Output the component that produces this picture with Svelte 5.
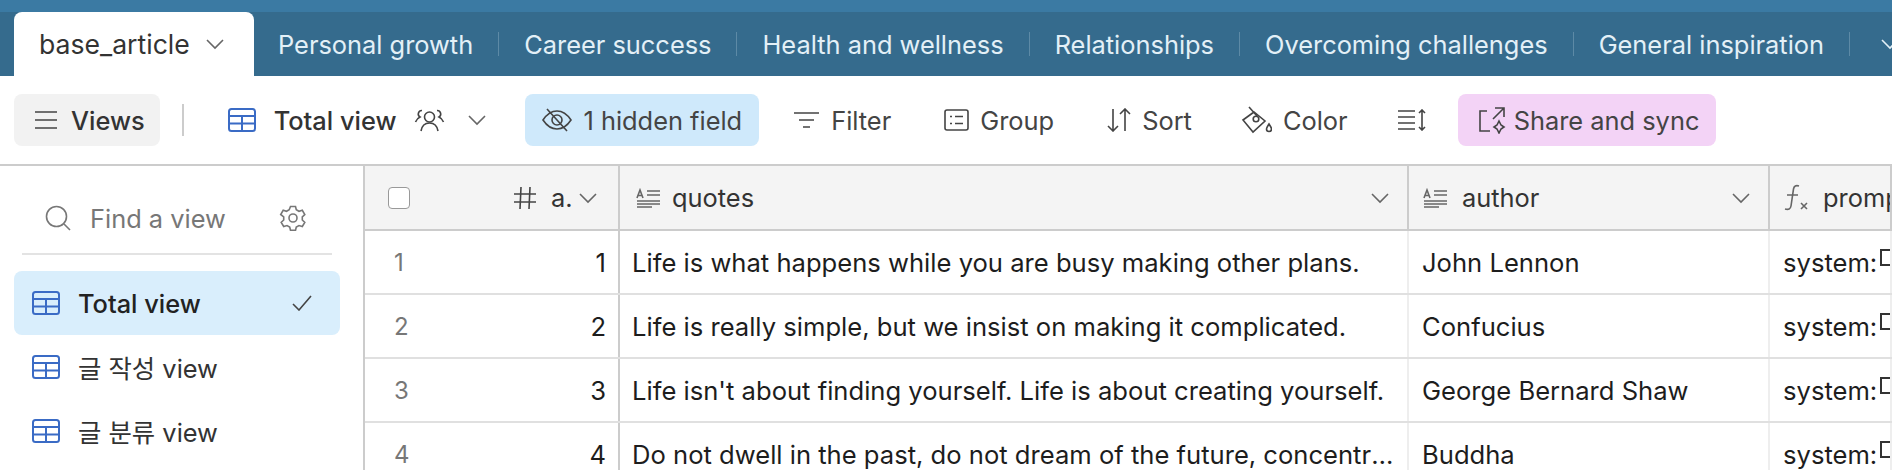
<script>
  const tabs = ['Personal growth', 'Career success', 'Health and wellness', 'Relationships', 'Overcoming challenges', 'General inspiration'];
  const views = [
    { name: 'Total view', active: true },
    { name: '글 작성 view' },
    { name: '글 분류 view' }
  ];
  const rows = [
    { n: 1, quote: 'Life is what happens while you are busy making other plans.', author: 'John Lennon' },
    { n: 2, quote: 'Life is really simple, but we insist on making it complicated.', author: 'Confucius' },
    { n: 3, quote: "Life isn't about finding yourself. Life is about creating yourself.", author: 'George Bernard Shaw' },
    { n: 4, quote: 'Do not dwell in the past, do not dream of the future, concentrate the mind on the present moment.', author: 'Buddha' }
  ];
</script>

{#snippet chevron(w = 18)}
  <svg class="chev" width={w} height="12" viewBox="0 0 18 12"><path d="M1 2l8 8 8-8" /></svg>
{/snippet}

{#snippet grid()}
  <svg class="grid-icon" width="28" height="24" viewBox="0 0 28 24"><rect x="1" y="1" width="26" height="22" rx="2.5" /><path d="M1 8h26M1 15.5h26M14 8v15" /></svg>
{/snippet}

{#snippet textIcon()}
  <svg class="ic soft" width="25" height="20" viewBox="0 0 25 20"><path d="M1 10l3-8 3 8M2.2 7.5h3.6M11 3h13M11 7h13M1 13h23M1 16h23M1 19h15" /></svg>
{/snippet}

<div class="page">
  <div class="tabbar">
    <div class="tab-active">
      <span>base_article</span>
      {@render chevron()}
    </div>
    {#each tabs as tab}
      <span class="tab">{tab}</span>
      <span class="sep"></span>
    {/each}
    <svg class="more" width="18" height="12" viewBox="0 0 18 12"><path d="M1 2l8 8 8-8" /></svg>
  </div>

  <div class="toolbar">
    <button class="btn views">
      <svg class="ic" width="24" height="20" viewBox="0 0 24 20"><path d="M1 2h22M1 10h22M1 18h22" /></svg>
      <b>Views</b>
    </button>
    <span class="vline"></span>
    <div class="current">
      {@render grid()}
      <b>Total view</b>
      <svg class="ic people" width="31" height="24" viewBox="0 0 31 24"><circle cx="15.5" cy="9" r="5" /><path d="M7 23c1-6 4-8 8.5-8s7.500 2 8.500 8M8 2.500a3.500 3.500 0 0 0-2 6.500c-2 1-3.500 2.500-4.500 5M23 2.500a3.500 3.500 0 0 1 2 6.500c2 1 3.500 2.500 4.500 5" /></svg>
      {@render chevron()}
    </div>
    <button class="btn hidden-field">
      <svg class="ic" width="30" height="26" viewBox="0 0 30 26"><path d="M1 13c4-6 8.500-9 14-9s10 3 14 9c-4 6-8.500 9-14 9S5 19 1 13zM5 2l20 22" /><circle cx="15" cy="13" r="5" /></svg>
      <span>1 hidden field</span>
    </button>
    <button class="btn">
      <svg class="ic" width="27" height="18" viewBox="0 0 27 18"><path d="M1 2h25M6 9h15M10 16h7" /></svg>
      <span>Filter</span>
    </button>
    <button class="btn group">
      <svg class="ic" width="25" height="22" viewBox="0 0 25 22"><rect x="1" y="1" width="23" height="20" rx="2" /><path d="M6 7.500h2M6 14.500h2M11 7.500h8M11 14.500h8" /></svg>
      <span>Group</span>
    </button>
    <button class="btn sort">
      <svg class="ic" width="24" height="24" viewBox="0 0 24 24"><path d="M6 1v22M1 18l5 5 5-5M18 23V1M13 6l5-5 5 5" /></svg>
      <span>Sort</span>
    </button>
    <button class="btn color">
      <svg class="ic" width="31" height="28" viewBox="0 0 31 28"><path d="M13 6L2 14l10 12 12-11zM8 1l8 9" /><circle cx="15" cy="13" r="2.800" /><path d="M28 18c-1.500 2.500-2.500 3.500-2.500 5a2.500 2.500 0 0 0 5 0c0-1.500-1-2.500-2.500-5z" /></svg>
      <span>Color</span>
    </button>
    <button class="btn density">
      <svg class="ic" width="29" height="22" viewBox="0 0 29 22"><path d="M1 2h17M1 8h17M1 14h17M1 20h17M25 1v20M22 4l3-3 3 3M22 18l3 3 3-3" /></svg>
    </button>
    <button class="btn share">
      <svg class="ic" width="28" height="28" viewBox="0 0 28 28"><path d="M9 5H2v20h10M15 13L26 2M17 2h9v9" /><path d="M21 15l2 4 3 2-3 2-2 4-2-4-3-2 3-2z" /></svg>
      <span>Share and sync</span>
    </button>
  </div>

  <div class="body">
    <aside class="sidebar">
      <div class="search">
        <svg class="ic light" width="26" height="26" viewBox="0 0 26 26"><circle cx="11.500" cy="11.500" r="10" /><path d="M19 19l6 6" /></svg>
        <span class="find">Find a view</span>
        <svg class="ic light gear" width="28" height="26" viewBox="0 0 28 26"><circle cx="14" cy="13" r="4" /><path d="M11.500 1.500h5l.8 3.300 2.700 1.500 3.300-1 2.500 4.200-2.500 2.300v3.200l2.500 2.300-2.500 4.200-3.300-1-2.700 1.500-.8 3.300h-5l-.8-3.300-2.700-1.500-3.300 1-2.500-4.200 2.500-2.300v-3.200L1.700 9.500l2.500-4.200 3.300 1 2.700-1.500z" /></svg>
      </div>
      <div class="rule"></div>
      {#each views as view}
        <div class="view" class:active={view.active}>
          {@render grid()}
          <span class="view-name">{view.name}</span>
          {#if view.active}
            <svg class="ic check" width="20" height="16" viewBox="0 0 20 16"><path d="M1 9l6 6L19 1" /></svg>
          {/if}
        </div>
      {/each}
    </aside>

    <div class="table">
      <div class="row head">
        <div class="c-id">
          <span class="checkbox"></span>
          <svg class="ic" width="24" height="24" viewBox="0 0 24 24"><path d="M8 1L7 23M17 1l-1 22M1 8h22M1 16h22" /></svg>
          <span class="short">a.</span>
          {@render chevron()}
        </div>
        <div class="c-quote">
          {@render textIcon()}
          <span class="title">quotes</span>
          {@render chevron()}
        </div>
        <div class="c-author">
          {@render textIcon()}
          <span class="title">author</span>
          {@render chevron()}
        </div>
        <div class="c-prompt">
          <svg class="ic soft" width="25" height="28" viewBox="0 0 25 28"><path d="M15 2c-3-1-5 0-5.500 3L7 22c-.5 3-2.500 4-6 3M3 11h11M17 19l6 6M23 19l-6 6" /></svg>
          <span class="title">prompt</span>
        </div>
      </div>
      {#each rows as row}
        <div class="row">
          <div class="c-id">
            <span class="num">{row.n}</span>
            <span class="value">{row.n}</span>
          </div>
          <div class="c-quote"><span class="text">{row.quote}</span></div>
          <div class="c-author"><span class="text">{row.author}</span></div>
          <div class="c-prompt"><span class="sys">system:</span><span class="tofu"></span></div>
        </div>
      {/each}
    </div>
  </div>
</div>

<style>
  :global(body) {
    margin: 0;
    background: #fff;
  }

  .page {
    width: 1892px;
    height: 470px;
    overflow: hidden;
    font-family: Inter, "Noto Sans CJK KR", sans-serif;
    font-size: 25.4px;
    color: #333;
  }

  svg {
    flex: none;
    fill: none;
    stroke-width: 1.6;
  }

  .ic {
    stroke: #444;
  }

  .ic.soft {
    stroke: #666;
  }

  .ic.light {
    stroke: #777;
  }

  .chev {
    stroke: #666;
  }

  .grid-icon {
    stroke: #3a6bc5;
    stroke-width: 2;
  }

  /* top bar */
  .tabbar {
    height: 64px;
    border-top: 12px solid #3b7aa3;
    background: #356b8d;
    display: flex;
    align-items: center;
    gap: 25px;
    overflow: hidden;
    white-space: nowrap;
  }

  .tab-active {
    flex: none;
    margin-left: 14px;
    margin-right: -1px;
    width: 240px;
    height: 64px;
    box-sizing: border-box;
    padding-left: 25px;
    display: flex;
    align-items: center;
    gap: 16px;
    font-size: 26.6px;
    background: #fff;
    border-radius: 8px 8px 0 0;
  }

  .tab {
    flex: none;
    color: #e3f0f7;
  }

  .sep {
    flex: none;
    width: 1px;
    height: 24px;
    background: #5d8aa6;
  }

  .more {
    stroke: #e3f0f7;
    margin-left: 6px;
  }

  /* toolbar */
  .toolbar {
    height: 88px;
    border-bottom: 2px solid #ccc;
    display: flex;
    align-items: center;
    gap: 17px;
    padding-left: 14px;
  }

  .btn {
    height: 52px;
    padding: 0 17px;
    display: flex;
    align-items: center;
    gap: 11px;
    border: none;
    border-radius: 8px;
    background: none;
    font: inherit;
    color: #444;
    white-space: nowrap;
  }

  b {
    font-weight: 500;
  }

  .views {
    background: #f2f2f2;
    padding: 0 15px 0 20px;
    gap: 13px;
    color: #333;
  }

  .vline {
    width: 2px;
    height: 32px;
    background: #ccc;
    margin: 0 27px 0 5px;
  }

  .current {
    display: flex;
    align-items: center;
    gap: 18px;
    margin-right: 22px;
  }

  .people {
    margin-right: 5px;
  }

  .hidden-field {
    background: #cfe9fb;
    gap: 11px;
  }

  .group,
  .sort {
    margin-left: 2px;
  }

  .color,
  .density {
    margin-left: -2px;
  }

  .share {
    background: #f3d3f6;
    padding: 0 17px 0 20px;
    margin-left: -2px;
    gap: 8px;
  }

  /* body */
  .body {
    display: flex;
    height: 304px;
  }

  .sidebar {
    width: 363px;
    flex: none;
    border-right: 2px solid #ccc;
  }

  .search {
    display: flex;
    align-items: center;
    height: 32px;
    margin-top: 36px;
    padding-left: 45px;
  }

  .find {
    margin-left: 19px;
    color: #777;
  }

  .gear {
    margin-left: 53px;
  }

  .rule {
    height: 2px;
    margin: 19px 31px 16px 22px;
    background: #e3e3e3;
  }

  .view {
    height: 64px;
    width: 326px;
    margin-left: 14px;
    box-sizing: border-box;
    padding: 0 28px 0 18px;
    display: flex;
    align-items: center;
    gap: 18px;
    border-radius: 8px;
    color: #333;
  }

  .view.active {
    background: #d9eefc;
    font-weight: 500;
    color: #222;
  }

  .check {
    margin-left: auto;
  }

  /* grid */
  .table {
    flex: 1;
    min-width: 0;
    overflow: hidden;
  }

  .row {
    display: grid;
    grid-template-columns: 255px 789px 361px 1fr;
    height: 64px;
    border-bottom: 2px solid #e0e0e0;
    box-sizing: border-box;
    color: #1d1d1d;
    font-size: 25.6px;
  }

  .row.head {
    height: 65px;
    background: #f4f4f4;
    border-bottom: 2px solid #ccc;
    color: #333;
    font-size: 25.4px;
  }

  .row > div {
    display: flex;
    align-items: center;
    min-width: 0;
    overflow: hidden;
    white-space: nowrap;
    box-sizing: border-box;
    padding-left: 13px;
    border-right: 2px solid #eee;
  }

  .head > div,
  .row > .c-id {
    border-right-color: #ccc;
  }

  .c-id {
    padding-right: 6px;
  }

  .row .c-quote {
    padding-left: 12px;
    padding-right: 10px;
  }

  .head .c-id {
    padding-left: 23px;
    padding-right: 19px;
  }

  .head .c-author {
    padding-left: 14px;
    padding-right: 18px;
    gap: 14px;
  }

  .head .c-quote {
    padding-left: 16px;
    padding-right: 18px;
    gap: 11px;
  }

  .head .c-prompt {
    padding-left: 14px;
    gap: 14px;
  }

  .checkbox {
    flex: none;
    width: 20px;
    height: 20px;
    border: 1.500px solid #999;
    border-radius: 4px;
    background: #fff;
    margin-right: 103px;
  }

  .short {
    margin: 0 6px 0 14px;
  }

  .title {
    flex: 1;
  }

  .num {
    margin-left: 16px;
    color: #777;
    font-size: 24px;
  }

  .value {
    margin-left: auto;
    padding-right: 6px;
  }

  .text {
    overflow: hidden;
    text-overflow: ellipsis;
  }

  .sys {
    flex: none;
  }

  .tofu {
    flex: none;
    width: 12px;
    height: 13px;
    margin: -10px 0 0 3px;
    border: 2px solid #333;
    border-right: none;
  }
</style>
